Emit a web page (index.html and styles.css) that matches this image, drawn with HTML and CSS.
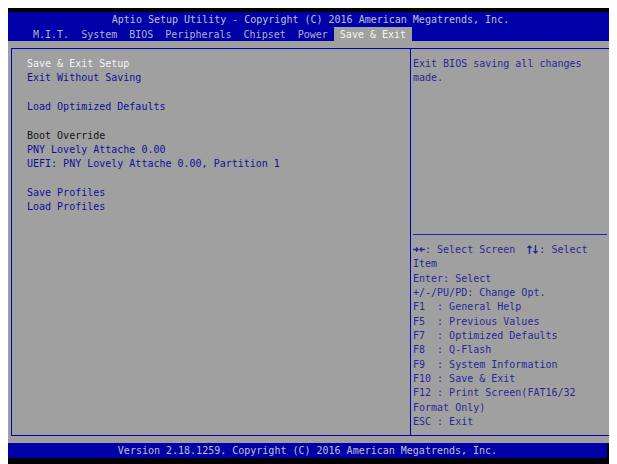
FILE: index.html
```html
<!DOCTYPE html>
<html lang="en">
<head>
  <meta charset="UTF-8">
  <title>Aptio Setup Utility</title>
  <link rel="stylesheet" href="styles.css">
</head>
<body>
  <div class="screen">
    <div class="topline"></div>

    <div class="header">
      <div class="title">Aptio Setup Utility - Copyright (C) 2016 American Megatrends, Inc.</div>
      <div class="tabs">
        <span class="tab">M.I.T.</span>
        <span class="tab">System</span>
        <span class="tab">BIOS</span>
        <span class="tab">Peripherals</span>
        <span class="tab">Chipset</span>
        <span class="tab">Power</span>
        <span class="tab active">Save &amp; Exit</span>
      </div>
    </div>

    <div class="main">
      <div class="frame">
        <div class="menu">
          <div class="row selected">Save &amp; Exit Setup</div>
          <div class="row item">Exit Without Saving</div>
          <div class="row"></div>
          <div class="row item">Load Optimized Defaults</div>
          <div class="row"></div>
          <div class="row label">Boot Override</div>
          <div class="row item">PNY Lovely Attache 0.00</div>
          <div class="row item">UEFI: PNY Lovely Attache 0.00, Partition 1</div>
          <div class="row"></div>
          <div class="row item">Save Profiles</div>
          <div class="row item">Load Profiles</div>
        </div>

        <div class="side">
          <div class="desc">
            <div class="row">Exit BIOS saving all changes</div>
            <div class="row">made.</div>
          </div>
          <div class="help">
            <div class="row"><svg class="arrows" width="12" height="9" viewBox="0 0 12 9"><path d="M0 4.5H5M3 2.5L5 4.5L3 6.5M12 4.5H7M9 2.5L7 4.5L9 6.5"/></svg>: Select Screen  <svg class="arrows" width="12" height="9" viewBox="0 0 12 9"><path d="M2.5 9V1M0.5 3L2.5 1L4.5 3M8.5 0V8M6.5 6L8.5 8L10.5 6"/></svg>: Select</div>
            <div class="row">Item</div>
            <div class="row">Enter: Select</div>
            <div class="row">+/-/PU/PD: Change Opt.</div>
            <div class="row">F1  : General Help</div>
            <div class="row">F5  : Previous Values</div>
            <div class="row">F7  : Optimized Defaults</div>
            <div class="row">F8  : Q-Flash</div>
            <div class="row">F9  : System Information</div>
            <div class="row">F10 : Save &amp; Exit</div>
            <div class="row">F12 : Print Screen(FAT16/32</div>
            <div class="row">Format Only)</div>
            <div class="row">ESC : Exit</div>
          </div>
        </div>
      </div>
    </div>

    <div class="footer">
      <div class="footer-bar">Version 2.18.1259. Copyright (C) 2016 American Megatrends, Inc.</div>
    </div>
    <div class="bottomline"></div>
  </div>
</body>
</html>
```

FILE: styles.css
```css
body { margin: 8px; background: #fff; }

.screen {
  width: 605px;
  height: 456px;
  background: #000;
  display: flex;
  flex-direction: column;
  font-family: "DejaVu Sans Mono", "Liberation Mono", monospace;
  font-size: 10px;
}

.topline { height: 4px; flex: none; }
.bottomline { height: 6px; flex: none; }

/* blue title band with the tab strip */
.header { height: 29px; flex: none; background: #0000a8; }
.title { height: 15px; line-height: 16px; text-align: center; color: #c0c0cc; white-space: pre; }
.tabs { display: flex; height: 14px; line-height: 15px; padding-left: 19px; }
.tab { padding: 0 6px; color: #b0b0c8; white-space: pre; }
.tab.active { background: #a0a0a0; color: #f4f4f4; }

/* gray work area */
.main {
  height: 402px;
  flex: none;
  box-sizing: border-box;
  background: #a0a0a0;
  padding: 7px 2px 7px 3px;
}
.frame {
  display: flex;
  height: 100%;
  box-sizing: border-box;
  border: 1px solid #0000b4;
}

.row { height: 14.35px; line-height: 14.35px; white-space: pre; }

.menu {
  width: 399px;
  flex: none;
  box-sizing: border-box;
  padding: 8px 0 0 15px;
  border-right: 1px solid #0000b4;
}
.menu .selected { color: #f4f4f4; }
.menu .item { color: #10109c; }
.menu .label { color: #141414; }

.side {
  flex: 1;
  display: flex;
  flex-direction: column;
  padding: 8px 3px 0 2px;
  color: #28289a;
}
.desc { height: 177px; border-bottom: 1px solid #2020b8; }
.help { padding-top: 8px; }

/* key glyphs drawn in the text colour */
.arrows {
  vertical-align: -1px;
  fill: none;
  stroke: currentColor;
  stroke-width: 1.4;
}

.footer { height: 15px; flex: none; display: flex; }
.footer-bar {
  width: 599px;
  background: #0000a8;
  color: #c0c0cc;
  line-height: 16px;
  text-align: center;
  white-space: pre;
}
```
